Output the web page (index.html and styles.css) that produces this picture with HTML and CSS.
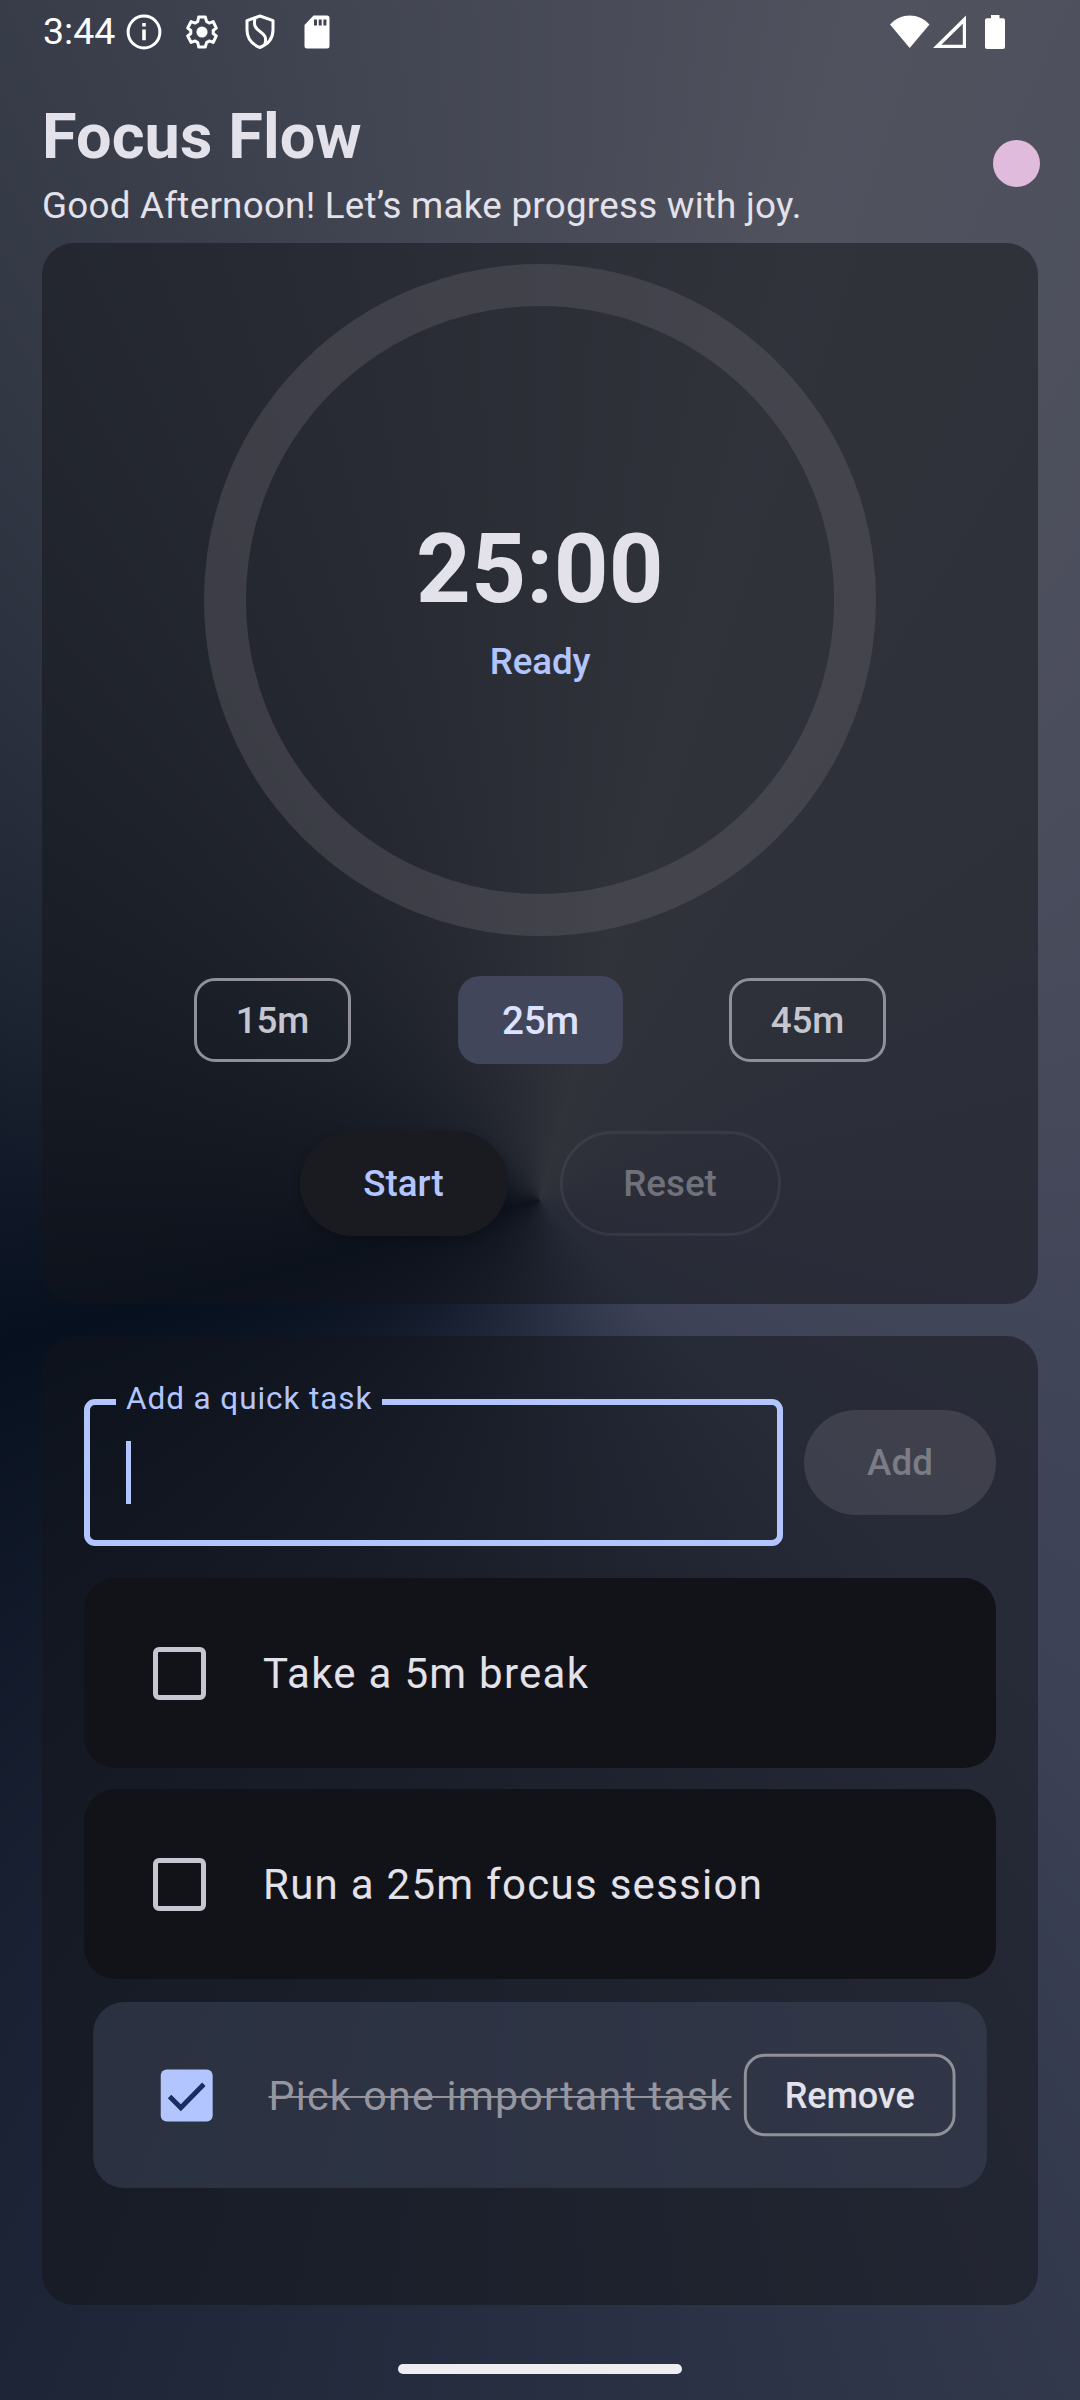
FILE: index.html
```html
<!DOCTYPE html>
<html lang="en">
<head>
<meta charset="utf-8">
<title>Focus Flow</title>
<link rel="stylesheet" href="styles.css">
</head>
<body>
<div class="screen">
  <div class="status">
    <span class="clock">3:44</span>
    <div class="status-icons">
      <svg width="36" height="36" viewBox="0 0 36 36"><circle cx="18" cy="18" r="15.9" fill="none" stroke="#fff" stroke-width="3"/><path d="M16.2 9h3.6v3.6h-3.6zM16.2 15.6h3.6v10.6h-3.6z" fill="#fff"/></svg>
      <svg width="36" height="36" viewBox="0 0 24 24"><path fill="none" stroke="#fff" stroke-width="2" stroke-linejoin="round" d="M19.43 12.98c.04-.32.07-.64.07-.98 0-.34-.03-.66-.07-.98l2.11-1.65-2.12-4.35-2.66 1.03c-.52-.4-1.08-.73-1.69-.98L14.2 2h-4.4l-.67 3.07c-.61.25-1.17.59-1.69.98L4.78 5.02 2.46 9.37l2.11 1.65c-.04.32-.07.65-.07.98 0 .33.03.66.07.98l-2.11 1.65 2.32 4.35 2.66-1.03c.52.4 1.08.73 1.69.98L9.8 22h4.4l.87-3.07c.61-.25 1.17-.59 1.69-.98l2.66 1.03 2.12-4.35z"/><circle cx="12" cy="12" r="3.7" fill="#fff"/></svg>
      <svg width="36" height="36" viewBox="0 0 36 36" fill="none" stroke="#fff" stroke-width="3"><path d="M18 2l13 4.600v9.500c0 8-5 14.300-13 17.400c-8-3.100-13-9.400-13-17.400V6.600z" stroke-linejoin="round"/><path d="M13 4.500c-1.500 6.500 0 9.500 5 13c4.500 3.200 7 5.500 4.800 13"/></svg>
      <svg width="36" height="36" viewBox="0 0 36 36"><path fill="#fff" fill-rule="evenodd" d="M14.500 1.500h13.500a2.500 2.500 0 0 1 2.500 2.500v28a2.500 2.500 0 0 1-2.500 2.500H8A2.500 2.500 0 0 1 5.500 32V11zM15 5.500v6h3v-6zm4.700 0v6h3v-6zm4.700 0v6h3v-6z"/></svg>
    </div>
    <div class="signal">
      <svg width="40" height="34" viewBox="0 0 40 34"><path fill="#fff" d="M0 9.500C11-2.500 28.500-2.500 39.500 9.500L19.700 33z"/></svg>
      <svg width="34" height="34" viewBox="0 0 34 34"><path fill="#fff" fill-rule="evenodd" d="M33 .5V33H0zM29.800 8.800L8.300 29.800h21.500z"/></svg>
      <svg class="battery" width="20" height="34" viewBox="0 0 20 34"><path fill="#fff" d="M6 0h8.500v3.300H18a2 2 0 0 1 2 2V32a2 2 0 0 1-2 2H2a2 2 0 0 1-2-2V5.300a2 2 0 0 1 2-2h4z"/></svg>
    </div>
  </div>

  <header class="header">
    <div>
      <h1 class="title">Focus Flow</h1>
      <p class="subtitle">Good Afternoon! Let’s make progress with joy.</p>
    </div>
    <span class="dot"></span>
  </header>

  <section class="card timer">
    <div class="ring">
      <div class="time">25:00</div>
      <div class="state">Ready</div>
    </div>
    <div class="chips">
      <button class="chip">15m</button>
      <button class="chip chip-on">25m</button>
      <button class="chip">45m</button>
    </div>
    <div class="actions">
      <button class="pill start">Start</button>
      <button class="pill reset">Reset</button>
    </div>
  </section>

  <section class="card tasks">
    <div class="entry">
      <fieldset class="field">
        <legend class="legend"><span class="label">Add a quick task</span></legend>
        <div class="caret"></div>
      </fieldset>
      <button class="pill add">Add</button>
    </div>
    <div class="task"><span class="box"></span><span class="name">Take a 5m break</span></div>
    <div class="task"><span class="box"></span><span class="name">Run a 25m focus session</span></div>
    <div class="task done">
      <span class="box checked"><svg width="53" height="53" viewBox="0 0 53 53"><path d="M9 27.500L20.500 39L44 15" fill="none" stroke="#182e60" stroke-width="5"/></svg></span>
      <span class="name">Pick one important task</span>
      <button class="chip remove">Remove</button>
    </div>
  </section>

  <div class="handle"></div>
</div>
</body>
</html>
```
FILE: styles.css
```css
* { box-sizing: border-box; }
body { margin: 0; font-family: Roboto, sans-serif; }
button { font: inherit; padding: 0; margin: 0; border: 0; background: none; }

.screen {
  width: 1080px;
  height: 2400px;
  overflow: hidden;
  display: flex;
  flex-direction: column;
  color: #e3e1e9;
  background: conic-gradient(from 255deg at 50% 50%, #07101f 0deg, #50525e 120deg, #3c4156 240deg, #07101f 360deg);
}

.status {
  height: 63px;
  padding: 0 75px 0 43px;
  display: flex;
  align-items: center;
  color: #fff;
}
.clock { width: 83px; padding-bottom: 2px; font-size: 37.5px; line-height: 44px; }
.status-icons { display: flex; gap: 21.8px; }
.signal { margin-left: auto; display: flex; gap: 3px; }
.battery { margin-left: 15px; }

.header {
  height: 180px;
  padding: 32px 40px 0 42px;
  display: flex;
  justify-content: space-between;
  align-items: flex-start;
}
.title { margin: 0; font-size: 63px; line-height: 84px; font-weight: 700; letter-spacing: .1px; }
.subtitle { margin: 0; font-size: 36.75px; line-height: 53px; letter-spacing: .26px; }
.dot { width: 47px; height: 47px; margin-top: 45px; border-radius: 50%; background: #e0bbdc; }

.card { margin: 0 42px; border-radius: 32px; background: rgba(18, 20, 24, .5); }

.timer {
  height: 1061px;
  flex: none;
  padding-top: 21px;
  display: flex;
  flex-direction: column;
  align-items: center;
}
.ring {
  width: 672px;
  height: 672px;
  padding-bottom: 2px;
  border: 42px solid rgba(95, 94, 102, .42);
  border-radius: 50%;
  display: flex;
  flex-direction: column;
  align-items: center;
  justify-content: center;
  gap: 8px;
}
.time { font-size: 95.5px; line-height: 116px; font-weight: 700; letter-spacing: .4px; }
.state { font-size: 36.75px; line-height: 53px; font-weight: 500; letter-spacing: -.15px; color: #b2c5ff; }

.chips { margin-top: 42px; display: flex; gap: 110.5px; }
.chip {
  width: 157px;
  height: 84px;
  border: 3px solid #8f9099;
  border-radius: 21px;
  font-size: 36.75px;
  font-weight: 500;
  letter-spacing: -.1px;
  color: #c5c6d0;
}
.chip-on { border: 0; background: #42465a; color: #dce2ff; transform: scale(1.05); }

.actions { margin-top: 69px; display: flex; gap: 52px; }
.pill {
  height: 105px;
  border-radius: 53px;
  font-size: 36.75px;
  font-weight: 500;
  letter-spacing: 0;
}
.start { width: 208px; background: #1a1b20; color: #b2c5ff; box-shadow: 0 3px 8px rgba(0, 0, 0, .18); }
.reset { width: 221px; border: 3px solid rgba(227, 225, 233, .07); color: rgba(227, 225, 233, .38); }

.tasks {
  height: 969px;
  flex: none;
  margin-top: 32px;
  padding: 42px;
  display: flex;
  flex-direction: column;
  gap: 21px;
}
.entry { height: 168px; margin-bottom: 11px; display: flex; align-items: center; gap: 21px; }
.field {
  width: 699px;
  height: 165px;
  margin: 3px 0 0;
  padding: 0 26px;
  border: 6px solid #b2c5ff;
  border-radius: 11px;
}
.legend { width: 266px; height: 42px; padding: 0 10px; }
.label {
  position: relative;
  top: -3px;
  display: block;
  font-size: 31.5px;
  line-height: 42px;
  letter-spacing: .92px;
  white-space: nowrap;
  color: #b2c5ff;
}
.caret { width: 5px; height: 63px; margin: 18px 0 0 10px; background: #b2c5ff; }
.add { width: 192px; background: rgba(227, 225, 233, .12); color: rgba(227, 225, 233, .38); }

.task {
  height: 190px;
  flex: none;
  padding: 0 32px 0 69px;
  border-radius: 32px;
  background: #121318;
  display: flex;
  align-items: center;
}
.box { width: 53px; height: 53px; border: 5px solid #c5c6d0; border-radius: 6px; }
.name { margin-left: 57px; font-size: 42px; line-height: 63px; letter-spacing: 1.28px; white-space: nowrap; }
.done { transform: scale(.98); background: rgba(64, 74, 94, .48); }
.done .name { color: #95969f; text-decoration: line-through; text-decoration-thickness: 2px; letter-spacing: 1.25px; }
.checked { border: 0; background: #b2c5ff; }
.checked svg { display: block; }
.remove { width: 216px; margin-left: auto; color: #e3e1e9; }

.handle { width: 284px; height: 10px; flex: none; margin: 59px auto 0; border-radius: 5px; background: #eeeef0; }
```
